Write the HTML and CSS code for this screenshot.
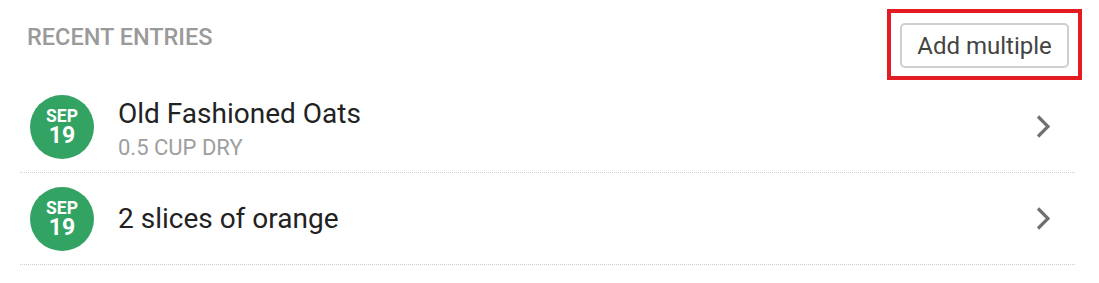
FILE: index.html
```html
<!DOCTYPE html>
<html lang="en">
<head>
    <meta charset="UTF-8">
    <title>Recent Entries</title>
    <link rel="stylesheet" href="styles.css">
</head>
<body>
    <div class="panel">
        <!-- Header -->
        <div class="header">
            <h2 class="title">RECENT ENTRIES</h2>
            <div class="highlight">
                <button class="btn">Add multiple</button>
            </div>
        </div>

        <!-- Entry list -->
        <ul class="entries">
            <li class="entry">
                <div class="date">
                    <span class="month">SEP</span>
                    <span class="day">19</span>
                </div>
                <div class="info two-line">
                    <div class="name">Old Fashioned Oats</div>
                    <div class="amount">0.5 CUP DRY</div>
                </div>
                <svg class="chevron" width="14" height="24" viewBox="0 0 14 24">
                    <path d="M2 1.5 L12 11.5 L2 21.5" fill="none" stroke="#707070" stroke-width="3.2"/>
                </svg>
            </li>
            <li class="entry">
                <div class="date">
                    <span class="month">SEP</span>
                    <span class="day">19</span>
                </div>
                <div class="info">
                    <div class="name">2 slices of orange</div>
                </div>
                <svg class="chevron" width="14" height="24" viewBox="0 0 14 24">
                    <path d="M2 1.5 L12 11.5 L2 21.5" fill="none" stroke="#707070" stroke-width="3.2"/>
                </svg>
            </li>
        </ul>
    </div>
</body>
</html>
```

FILE: styles.css
```css
body {
    margin: 0;
    background: #fff;
    font-family: Roboto, "Liberation Sans", sans-serif;
}
.panel {
    width: 1099px;
}
.header {
    display: flex;
    justify-content: space-between;
    align-items: flex-start;
    padding: 9px 17px 0 27px;
    height: 72px;
}
.title {
    margin: 14px 0 0;
    font-size: 23.5px;
    line-height: 28px;
    font-weight: 500;
    color: #9a9a9a;
}
.highlight {
    border: 4px solid #e31b23;
    padding: 10px 9px 8px 9px;
}
.btn {
    display: block;
    width: 169px;
    height: 45px;
    border: 2px solid #cfcfcf;
    border-radius: 5px;
    background: #fff;
    font-family: Roboto, "Liberation Sans", sans-serif;
    font-size: 24px;
    color: #444;
    padding: 0;
}
.entries {
    list-style: none;
    margin: 0 24px 0 20px;
    padding: 0;
}
.entry {
    display: flex;
    align-items: center;
    padding: 14px 25px 13px 10px;
    border-bottom: 1px dotted #cfcfcf;
}
.date {
    width: 64px;
    height: 64px;
    border-radius: 50%;
    background: #33a363;
    color: #fff;
    display: flex;
    flex-direction: column;
    align-items: center;
    justify-content: center;
    font-weight: 700;
}
.month {
    font-size: 17.5px;
    line-height: 17px;
    margin-top: 1px;
}
.day {
    font-size: 23px;
    line-height: 22px;
}
.info {
    flex: 1;
    margin-left: 24px;
}
.info.two-line {
    align-self: flex-start;
    padding-top: 5px;
}
.name {
    font-size: 28px;
    line-height: 28px;
    color: #222;
}
.amount {
    font-size: 22px;
    line-height: 18px;
    margin-top: 11px;
    color: #9e9e9e;
}
.chevron {
    display: block;
}
```
